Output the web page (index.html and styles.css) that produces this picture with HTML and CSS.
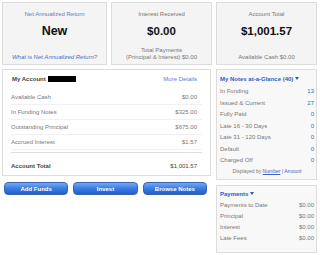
FILE: index.html
```html
<!DOCTYPE html>
<html lang="en">
  <head>
    <meta charset="UTF-8" />
    <meta name="viewport" content="width=device-width, initial-scale=1.0" />
    <title>Account Summary</title>
    <link rel="stylesheet" href="styles.css">
  </head>
  <body>
    <!-- Summary boxes -->
    <section class="summary">
      <div class="stat">
        <div class="stat-title stat-title-blue">Net Annualized Return</div>
        <div class="stat-value stat-value-big">New</div>
        <div class="stat-foot"><a class="help-link">What is Net Annualized Return?</a></div>
      </div>
      <div class="stat">
        <div class="stat-title">Interest Received</div>
        <div class="stat-value">$0.00</div>
        <div class="stat-foot">Total Payments<br>(Principal &amp; Interest) $0.00</div>
      </div>
      <div class="stat">
        <div class="stat-title">Account Total</div>
        <div class="stat-value">$1,001.57</div>
        <div class="stat-foot">Available Cash $0.00</div>
      </div>
    </section>

    <section class="main">
      <div class="left">
        <div class="account">
          <div class="account-head">
            <span class="account-name">My Account <span class="redacted"></span></span>
            <a class="more">More Details</a>
          </div>
          <div class="account-rows">
            <div class="row"><span>Available Cash</span><span>$0.00</span></div>
            <div class="row"><span>In Funding Notes</span><span>$325.00</span></div>
            <div class="row"><span>Outstanding Principal</span><span>$675.00</span></div>
            <div class="row"><span>Accrued Interest</span><span>$1.57</span></div>
            <div class="row total"><span class="total-label">Account Total</span><span>$1,001.57</span></div>
          </div>
        </div>
        <div class="actions">
          <button>Add Funds</button>
          <button>Invest</button>
          <button>Browse Notes</button>
        </div>
      </div>

      <div class="right">
        <div class="panel notes">
          <div class="panel-title">My Notes at-a-Glance (40) <span class="caret"></span></div>
          <div class="panel-rows">
            <div class="prow"><span>In Funding</span><span class="count">13</span></div>
            <div class="prow"><span>Issued &amp; Current</span><span class="count">27</span></div>
            <div class="prow"><span>Fully Paid</span><span class="count">0</span></div>
            <div class="prow"><span>Late 16 - 30 Days</span><span class="count">0</span></div>
            <div class="prow"><span>Late 31 - 120 Days</span><span class="count">0</span></div>
            <div class="prow"><span>Default</span><span class="count">0</span></div>
            <div class="prow"><span>Charged Off</span><span class="count">0</span></div>
          </div>
          <div class="display-by">Displayed by <a class="under">Number</a> | <a>Amount</a></div>
        </div>
        <div class="panel payments">
          <div class="panel-title">Payments <span class="caret"></span></div>
          <div class="panel-rows">
            <div class="prow pay"><span>Payments to Date</span><span>$0.00</span></div>
            <div class="prow pay"><span>Principal</span><span>$0.00</span></div>
            <div class="prow pay"><span>Interest</span><span>$0.00</span></div>
            <div class="prow pay"><span>Late Fees</span><span>$0.00</span></div>
          </div>
        </div>
      </div>
    </section>
  </body>
</html>
```
FILE: styles.css
```css
body {
  font-family: "Liberation Sans", Arial, sans-serif;
  font-size: 6px;
  margin: 0;
  padding: 2px 3px 0 2px;
  background-color: #fff;
  color: #777;
}

a {
  color: #3a66cc;
}

/* Top summary boxes */
.summary {
  display: grid;
  grid-template-columns: 105px 101px 101px;
  gap: 4px;
}

.stat {
  height: 63px;
  box-sizing: border-box;
  border: 1px solid #dcdcdc;
  background-color: #f4f4f4;
  display: flex;
  flex-direction: column;
  align-items: center;
  padding: 6px 2px 3px;
  text-align: center;
}

.stat-title {
  line-height: 10px;
}

.stat-title-blue {
  color: #6a7db3;
}

.stat-value {
  margin-top: 5px;
  font-size: 11.5px;
  font-weight: bold;
  line-height: 14px;
  color: #111;
}

.stat-value-big {
  font-size: 12.5px;
}

.stat-foot {
  margin-top: auto;
  line-height: 7px;
}

.help-link {
  font-style: italic;
  color: #4a6fc8;
}

/* Main area */
.main {
  display: flex;
  gap: 5px;
  margin-top: 4px;
}

.left {
  width: 209px;
}

.right {
  width: 101px;
}

.account {
  border: 1px solid #ddd;
  background-color: #fff;
}

.account-head {
  display: flex;
  justify-content: space-between;
  padding: 4px 13px 0 9px;
  line-height: 10px;
}

.account-name {
  font-weight: bold;
  color: #444;
}

.redacted {
  display: inline-block;
  width: 28px;
  height: 6px;
  margin-left: 1px;
  background-color: #000;
  vertical-align: -1px;
}

.more {
  color: #5a7bd8;
}

.account-rows {
  margin-top: 6px;
  padding: 0 8px;
}

.row {
  display: flex;
  justify-content: space-between;
  height: 15px;
  box-sizing: border-box;
  line-height: 14px;
  padding-right: 5px;
  border-bottom: 1px solid #f1f1f1;
}

.row.total {
  height: auto;
  margin-top: 2px;
  padding: 8px 5px 4px 0;
  line-height: 10px;
  border-bottom: none;
  border-top: 1px solid #ddd;
  color: #444;
}

.total-label {
  font-weight: bold;
}

.actions {
  display: grid;
  grid-template-columns: repeat(3, 1fr);
  gap: 5px;
  margin-top: 6px;
  padding: 0 4px 0 2px;
}

.actions button {
  height: 13px;
  padding: 0;
  border: 1px solid #3a64ad;
  border-radius: 4px;
  background: linear-gradient(#73a9f4, #3b7be2 50%, #215ecb);
  color: #fff;
  font-family: "Liberation Sans", Arial, sans-serif;
  font-size: 6px;
  font-weight: bold;
}

/* Right column panels */
.panel {
  border: 1px solid #ddd;
  background-color: #f8f8f8;
  padding: 0 2px 0 3px;
}

.panel-title {
  padding-top: 4px;
  line-height: 10px;
  font-weight: bold;
  color: #2b5cc6;
}

.caret {
  display: inline-block;
  width: 0;
  height: 0;
  border-left: 2px solid transparent;
  border-right: 2px solid transparent;
  border-top: 3px solid #2b5cc6;
  vertical-align: 1px;
}

.notes .panel-rows {
  margin-top: 2px;
}

.prow {
  display: flex;
  justify-content: space-between;
  line-height: 11.5px;
}

.count {
  color: #3a66cc;
}

.display-by {
  text-align: center;
  font-size: 5px;
  line-height: 8px;
  padding-bottom: 4px;
}

.under {
  text-decoration: underline;
}

.payments {
  margin-top: 5px;
  padding-bottom: 7px;
}

.payments .panel-title {
  padding-top: 3px;
}

.payments .panel-rows {
  margin-top: 1px;
}

.prow.pay {
  line-height: 11.3px;
}
```
